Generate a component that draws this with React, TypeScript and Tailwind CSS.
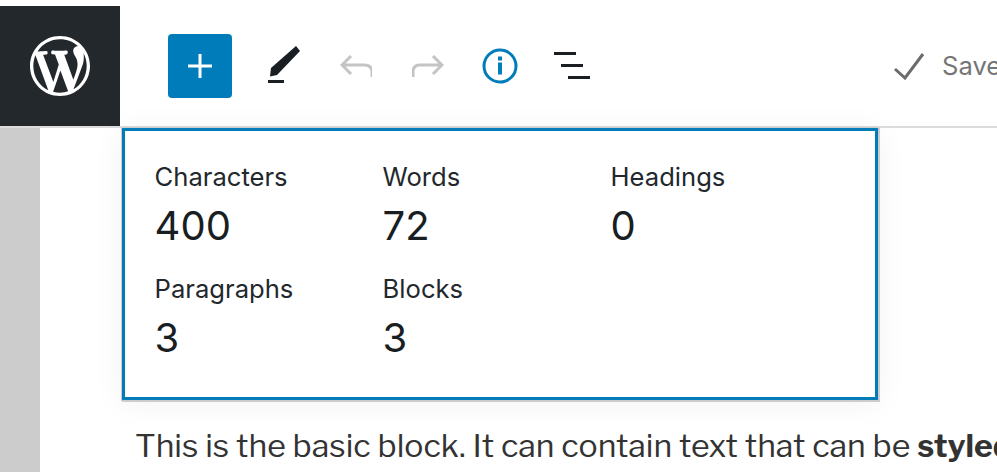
const font = { fontFamily: "Inter, 'Liberation Sans', sans-serif" }

const stats = [
  { label: 'Characters', value: 400 },
  { label: 'Words', value: 72 },
  { label: 'Headings', value: 0 },
  { label: 'Paragraphs', value: 3 },
  { label: 'Blocks', value: 3 },
]

const WP_PATH =
  'M20 10c0-5.51-4.49-10-10-10C4.48 0 0 4.49 0 10c0 5.52 4.48 10 10 10 5.51 0 10-4.48 10-10zM7.78 15.37L4.37 6.22c.55-.02 1.17-.08 1.17-.08.5-.06.44-1.13-.06-1.11 0 0-1.45.11-2.37.11-.18 0-.37 0-.58-.01C4.12 2.69 6.87 1.11 10 1.11c2.33 0 4.45.87 6.05 2.34-.68-.11-1.65.39-1.65 1.58 0 .74.45 1.36.9 2.1.35.61.55 1.36.55 2.46 0 1.49-1.4 5-1.4 5l-3.03-8.37c.54-.02.82-.17.82-.17.5-.05.44-1.25-.06-1.22 0 0-1.44.12-2.38.12-.87 0-2.33-.12-2.33-.12-.5-.03-.56 1.2-.06 1.22l.92.08 1.26 3.41zM17.41 10c.24-.64.74-1.87.43-4.25.7 1.29 1.05 2.71 1.05 4.25 0 3.29-1.73 6.24-4.4 7.78.97-2.59 1.94-5.2 2.92-7.78zM6.1 18.09C3.12 16.65 1.11 13.53 1.11 10c0-1.3.23-2.48.72-3.59C3.25 10.3 4.67 14.2 6.1 18.09zm4.03-6.63l2.58 6.98c-.86.29-1.76.45-2.71.45-.79 0-1.57-.11-2.29-.33.81-2.38 1.62-4.74 2.42-7.1z'

function Toolbar() {
  return (
    <div className="flex h-[128px] pt-[6px] border-b-2 border-[#dcdcdc] bg-white">
      <div className="flex h-[120px] w-[120px] shrink-0 items-center justify-center bg-[#23282d]">
        <svg width="60" height="60" viewBox="0 0 20 20" fill="#fff">
          <path d={WP_PATH} />
        </svg>
      </div>
      <div className="ml-[48px] flex h-[120px] shrink-0 items-start pt-[28px]">
        <button className="flex h-16 w-16 items-center justify-center rounded-[4px] bg-[#007cba]">
          <svg width="24" height="24" viewBox="0 0 24 24" stroke="#fff" strokeWidth="3">
            <path d="M12 0v24M0 12h24" />
          </svg>
        </button>
        {/* edit */}
        <svg className="ml-[36px] mt-[12px]" width="32" height="40" viewBox="0 0 32 40" fill="#191e23">
          <path d="M28 0 L32 5 L9 29 L2 30.5 L3 22 Z" />
          <rect x="0" y="34" width="16" height="3" />
        </svg>
        {/* undo */}
        <svg className="ml-[40px] mt-[16px]" width="32" height="32" viewBox="0 0 32 32" fill="none" stroke="#c4c4c4" strokeWidth="3">
          <path d="M11 6 L2 15 L11 24 M2 15 H24 Q32 15 32 22 V27" />
        </svg>
        {/* redo */}
        <svg className="ml-[40px] mt-[16px]" width="32" height="32" viewBox="0 0 32 32" fill="none" stroke="#c4c4c4" strokeWidth="3">
          <path d="M21 6 L30 15 L21 24 M30 15 H8 Q1 15 1 22 V27" />
        </svg>
        {/* info */}
        <svg className="ml-[38px] mt-[14px]" width="36" height="36" viewBox="0 0 36 36" fill="none">
          <circle cx="18" cy="18" r="16" stroke="#007cba" strokeWidth="3" />
          <rect x="16" y="8.5" width="4" height="4" fill="#007cba" />
          <rect x="16" y="14.5" width="4" height="12" fill="#007cba" />
        </svg>
        {/* list view */}
        <div className="ml-[36px] mt-[18px] flex w-9 flex-col gap-[9px]">
          <div className="h-[3px] w-[22px] bg-[#191e23]" />
          <div className="ml-[7px] h-[3px] w-[22px] bg-[#191e23]" />
          <div className="ml-[14px] h-[3px] w-[22px] bg-[#191e23]" />
        </div>
      </div>
      <div className="ml-[303px] flex h-[120px] shrink-0 items-start pt-[46px]" style={font}>
        <svg width="32" height="28" viewBox="0 0 32 28" fill="none" stroke="#6c6c6c" strokeWidth="3">
          <path d="M2 17 L12 26 L30 2" />
        </svg>
        <span className="ml-[17px] text-[25.6px] leading-[28px] text-[#757575]">Saved</span>
      </div>
    </div>
  )
}

function InfoPopover() {
  return (
    <div
      className="absolute left-[122px] top-[128px] h-[272px] w-[756px] border-[3px] border-[#007cba] bg-white pl-[29.6px] pt-[29px] shadow-[0_0_0_1px_#cccccc,1px_1px_0_1px_#cccccc,0_3px_30px_rgba(25,30,35,0.06)]"
      style={font}
    >
      <div className="grid grid-cols-[228px_228px_228px] gap-y-[16px]">
        {stats.map((s) => (
          <div key={s.label} className="h-[96px] text-[#191e23]">
            <div className="text-[25.6px] leading-[34px] text-[#23282d]">{s.label}</div>
            <div className="mt-[4px] text-[40px] leading-[56px]">{s.value}</div>
          </div>
        ))}
      </div>
    </div>
  )
}

export default function App() {
  return (
    <div className="relative h-[472px] w-[997px] overflow-hidden bg-white">
      <Toolbar />
      <div className="flex h-[344px]">
        <div className="w-10 shrink-0 bg-[#cccccc]" />
        <div className="shrink-0 pl-[95px] pt-[296px]">
          <p className="whitespace-nowrap text-[32px] leading-[44px] text-[#333333]" style={{ fontFamily: "'Libre Franklin', 'Liberation Sans', sans-serif" }}>
            This is the basic block. It can contain text that can be <strong>styled</strong>
          </p>
        </div>
      </div>
      <InfoPopover />
    </div>
  )
}
